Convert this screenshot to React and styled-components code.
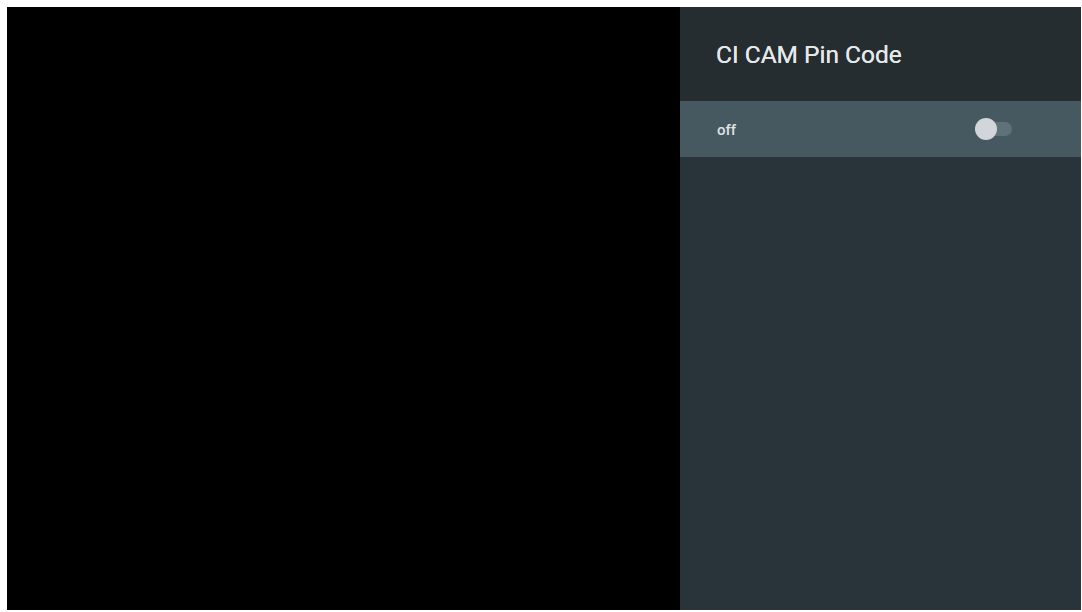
import React from "react";
import styled, { createGlobalStyle } from "styled-components";

const GlobalStyle = createGlobalStyle`
  html, body {
    margin: 0;
    padding: 0;
    background: #ffffff;
  }
  body {
    font-family: Roboto, "Noto Sans", sans-serif;
  }
`;

const Page = styled.div`
  width: 1082px;
  height: 612px;
  box-sizing: border-box;
  padding: 7px 1px 2px 7px;
  display: flex;
`;

const Screen = styled.div`
  flex: 1;
  display: flex;
`;

const Video = styled.div`
  width: 673px;
  background: #000000;
`;

const Panel = styled.aside`
  flex: 1;
  display: flex;
  flex-direction: column;
  background: #29333a;
`;

const Header = styled.header`
  height: 94px;
  box-sizing: border-box;
  padding: 33px 0 0 36px;
  background: #252d31;
`;

const Title = styled.h2`
  margin: 0;
  font-family: Roboto, sans-serif;
  font-weight: 400;
  font-size: 24.5px;
  line-height: 30px;
  color: #e6e8e9;
  text-shadow: 0 0 0.4px #e6e8e9;
`;

const Row = styled.div`
  height: 56px;
  display: flex;
  align-items: center;
  justify-content: space-between;
  padding: 0 69px 0 37px;
  background: ${({ focused }) => (focused ? "#465860" : "transparent")};
`;

const Label = styled.span`
  font-size: 15px;
  font-weight: 500;
  color: #dfe3e5;
  margin-top: 1px;
`;

const Track = styled.div`
  position: relative;
  width: 32px;
  height: 14px;
  border-radius: 7px;
  background: ${({ on }) => (on ? "#7fb3c9" : "#5f7279")};
`;

const Thumb = styled.div`
  position: absolute;
  top: -4px;
  left: ${({ on }) => (on ? "11px" : "-5px")};
  width: 22px;
  height: 22px;
  border-radius: 50%;
  background: #d2d5d9;
`;

const Toggle = ({ on }) => (
  <Track on={on}>
    <Thumb on={on} />
  </Track>
);

export default function App() {
  return (
    <>
      <GlobalStyle />
      <Page>
        <Screen>
          <Video />
          <Panel>
            <Header>
              <Title>CI CAM Pin Code</Title>
            </Header>
            <Row focused>
              <Label>off</Label>
              <Toggle on={false} />
            </Row>
          </Panel>
        </Screen>
      </Page>
    </>
  );
}
